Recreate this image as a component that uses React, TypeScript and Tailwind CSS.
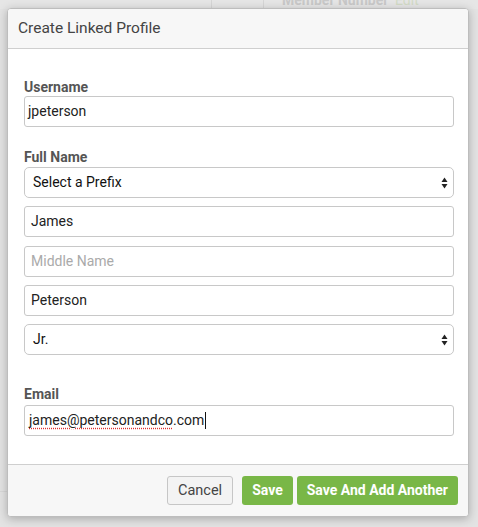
import React from "react";

const font = { fontFamily: "Roboto, 'Open Sans', Arial, sans-serif" };

function Arrows() {
  return (
    <svg width="7" height="12" viewBox="0 0 7 12" className="shrink-0">
      <path d="M3.5 0.5 L6.5 5 L0.5 5 Z" fill="#222" />
      <path d="M3.5 11.5 L6.5 7 L0.5 7 Z" fill="#222" />
    </svg>
  );
}

function Field({ children, className = "" }: { children?: React.ReactNode; className?: string }) {
  return (
    <div
      className={
        "h-[31px] w-full border border-[#c8c8c8] rounded-[3px] bg-white flex items-center text-[14px] text-[#222] " +
        className
      }
    >
      {children}
    </div>
  );
}

function Select({ value }: { value: string }) {
  return (
    <div className="h-[31px] w-full border border-[#c8c8c8] rounded-[5px] bg-white flex items-center justify-between pl-[8px] pr-[5px] text-[14px] text-[#111]">
      <span>{value}</span>
      <Arrows />
    </div>
  );
}

function Label({ children, className = "" }: { children: React.ReactNode; className?: string }) {
  return <div className={"h-[18px] leading-[18px] text-[14px] font-bold text-[#555] " + className}>{children}</div>;
}

export default function App() {
  return (
    <div className="relative w-[478px] h-[527px] overflow-hidden bg-[#e3e3e3]" style={font}>
      {/* backdrop */}
      <div className="absolute left-0 top-0 w-full h-[9px] bg-[#e6e6e6]" />
      <div className="absolute left-[211px] top-0 w-px h-[9px] bg-[#d6d6d6]" />
      <div className="absolute left-[263px] top-0 w-px h-[9px] bg-[#d6d6d6]" />
      <div className="absolute left-[282px] top-[-8px] text-[14px] font-bold text-[#c9c9c9] leading-[16px]">Member Number</div>
      <div className="absolute left-[395px] top-[-8px] text-[14px] text-[#d3dcc6] leading-[16px]">Edit</div>
      <div className="absolute left-0 top-[491px] w-[7px] h-px bg-[#d8d8d8]" />

      {/* modal */}
      <div className="absolute left-[7px] top-[8px] w-[462px] border border-[#bdbdbd] rounded-[4px] bg-white shadow-[0_2px_10px_rgba(0,0,0,0.25)] overflow-hidden">
        <div className="h-[40px] bg-[#f7f7f7] border-b border-[#cfcfcf] flex items-center pl-[10px] text-[15.5px] text-[#444]">
          Create Linked Profile
        </div>

        <div className="pl-[16px] pr-[14px] pt-[29px] pb-[28px]">
          <Label>Username</Label>
          <Field className="pl-[3px]">jpeterson</Field>

          <Label className="mt-[21px] mb-[1px]">Full Name</Label>
          <div className="flex flex-col gap-[8.25px]">
            <Select value="Select a Prefix" />
            <Field className="pl-[6px]">James</Field>
            <Field className="pl-[6px] text-[#aaaaaa]">Middle Name</Field>
            <Field className="pl-[6px]">Peterson</Field>
            <Select value="Jr." />
          </div>

          <Label className="mt-[30px] mb-[2px]">Email</Label>
          <Field className="pl-[4px]">
            <span className="underline decoration-dotted decoration-[#e03030] underline-offset-[3px]">james@petersonandco</span>
            <span>.com</span>
            <span className="inline-block w-px h-[17px] bg-[#111] ml-[1px]" />
          </Field>
        </div>

        <div className="bg-[#f7f7f7] border-t border-[#cfcfcf] pt-[11px] pb-[11px] pr-[10px] flex justify-end items-center">
          <button className="h-[29px] px-[10px] border border-[#c6c6c6] rounded-[3px] bg-[#f3f3f3] text-[14.5px] text-[#444]">
            Cancel
          </button>
          <button className="h-[29px] px-[10px] ml-[9px] rounded-[3px] bg-[#79b747] text-[14px] font-bold text-white">
            Save
          </button>
          <button className="h-[29px] px-[10px] ml-[4px] rounded-[3px] bg-[#79b747] text-[14px] font-bold text-white">
            Save And Add Another
          </button>
        </div>
      </div>
    </div>
  );
}
